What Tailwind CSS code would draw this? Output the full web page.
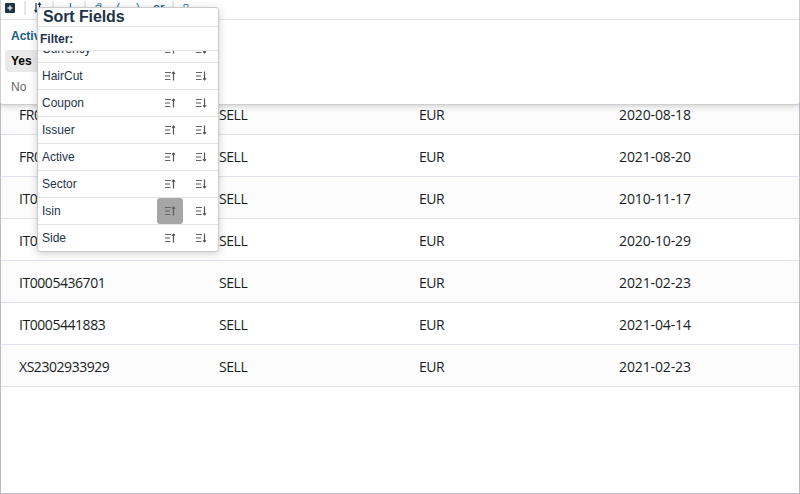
<!DOCTYPE html>
<html lang="en">
<head>
<meta charset="utf-8">
<title>Sort Fields</title>
<script src="https://cdn.jsdelivr.net/npm/@tailwindcss/browser@4"></script>
</head>
<body class="w-[800px] h-[494px] overflow-hidden bg-white relative font-['Liberation_Sans',Arial,sans-serif]">
<svg class="hidden">
  <symbol id="asc" viewBox="0 0 12 12"><path d="M1 2.500h6M1 9.500h5.500" stroke="#666" stroke-width="1"/><path d="M1 6h5" stroke="#aaa" stroke-width="2"/><path d="M9.500 2v8.500M8 3.700L9.500 2.200L11 3.700" stroke="#555" stroke-width="1.2" fill="none"/></symbol>
  <symbol id="asc-on" viewBox="0 0 12 12"><path d="M1 2.500h6M1 9.500h5.500" stroke="#666" stroke-width="1"/><path d="M1 6h5" stroke="#808080" stroke-width="2"/><path d="M9.500 2v8.500M8 3.700L9.500 2.200L11 3.700" stroke="#5c5c5c" stroke-width="1.2" fill="none"/></symbol>
  <symbol id="desc" viewBox="0 0 12 12"><path d="M1 2.500h6M1 9.500h5.500" stroke="#666" stroke-width="1"/><path d="M1 6h5" stroke="#aaa" stroke-width="2"/><path d="M9.500 1.500v8.500M8 8.300L9.500 9.800L11 8.300" stroke="#555" stroke-width="1.2" fill="none"/></symbol>
</svg>
<main class="w-full h-full border border-[#babac8] pt-[92px]">
  <div id="grid" class="font-['Open_Sans',sans-serif] text-[14px] tracking-[-0.45px] text-[#181d1f]"></div>
</main>

<section class="absolute left-0 top-0 w-[800px] h-[105px] bg-white border border-t-0 border-[#cfcfcf] rounded-b-[3px] shadow-[0_1px_6px_rgba(0,0,0,0.2)]">
  <div class="h-5 border-b border-[#e2e2e2] overflow-hidden">
    <svg class="block" width="798" height="19" viewBox="1 0 798 19" fill="none">
      <rect x="5" y="3" width="10" height="10" rx="1" fill="#1e3448"/><path d="M7.500 8h5M10 5.500v5" stroke="#dce1e5" stroke-width="1.500"/>
      <path d="M25 1v14M53 1v14M85 1v14M173 1v14" stroke="#dedede" stroke-width="1.5"/>
      <path d="M36 3v9M34.500 10L36 12L37.500 10M39.500 12V3M38 5L39.500 3L41 5" stroke="#1e3448" stroke-width="1.2"/>
      <path d="M70.500 3v8" stroke="#2387b5" stroke-width="1.300"/>
      <path d="M96 5.500h4.500v5h-4.500zM97 3.800h4v4M184 10V4.500h4V10" stroke="#4a86ac" stroke-width="1"/>
      <g fill="#1a6d97" font-family="Liberation Sans" font-size="12"><text x="116" y="12">(</text><text x="136" y="12">)</text><text x="153" y="11" font-size="11.500" font-weight="bold">or</text></g>
    </svg>
  </div>
  <div class="pt-[5px] pl-1 text-[12px]">
    <div class="h-[22px] leading-[22px] px-1.5 font-bold text-[#146082]">Active</div>
    <div class="mt-[3px] h-[22px] w-16 leading-[22px] px-1.5 font-bold text-black bg-[#e9e9e9] rounded">Yes</div>
    <div class="mt-1 h-[22px] leading-[22px] px-1.5 text-[#666]">No</div>
  </div>
</section>

<aside class="absolute left-[37px] top-[7px] w-[182px] h-[245px] bg-white border border-[#cbcbcb] rounded-[3px] shadow-[0_2px_8px_rgba(0,0,0,0.18)] flex flex-col text-[#1e3448]">
  <h1 class="h-[19px] shrink-0 border-b border-[#e5e5e5] pl-[5px] text-[16px] leading-[17px] tracking-[-0.1px] font-bold">Sort Fields</h1>
  <div class="h-6 shrink-0 border-b border-[#e5e5e5] pl-0.5 text-[12px] leading-6 font-bold">Filter:</div>
  <div class="flex-1 overflow-hidden"><div id="fields" class="-mt-[15px] text-[12px]"></div></div>
</aside>
<script>
const rows = ['FR0014001N38','FR0014002J35','IT0005425761','IT0005433690','IT0005436701','IT0005441883','XS2302933929'];
const dates = ['2020-08-18','2021-08-20','2010-11-17','2020-10-29','2021-02-23','2021-04-14','2021-02-23'];
document.getElementById('grid').innerHTML = rows.map((r,i) => `<div class="grid grid-cols-[200px_200px_200px_1fr] h-[42px] leading-[44px] border-b border-[#dde2eb] pl-[18px] ${i%2 ? 'bg-white' : 'bg-[#fcfcfc]'}"><span class="tracking-[-0.45px]">${r}</span><span>SELL</span><span>EUR</span><span class="tracking-[-0.12px]">${dates[i]}</span></div>`).join('');
const icon = (id, on) => `<span class="w-[26px] h-[26px] rounded-[3px] flex items-center justify-center ${on ? 'bg-[#a6a6a6]' : ''}"><svg width="12" height="12"><use href="#${id}"/></svg></span>`;
document.getElementById('fields').innerHTML = ['Currency','HairCut','Coupon','Issuer','Active','Sector','Isin','Side'].map(f => `<div class="h-[27px] border-b border-[#e5e5e5] pl-1 pr-1 flex items-center gap-[5px]"><span class="flex-1 leading-[26px]">${f}</span>${f==='Isin' ? icon('asc-on', true) : icon('asc')}${icon('desc')}</div>`).join('');
</script>
</body>
</html>
